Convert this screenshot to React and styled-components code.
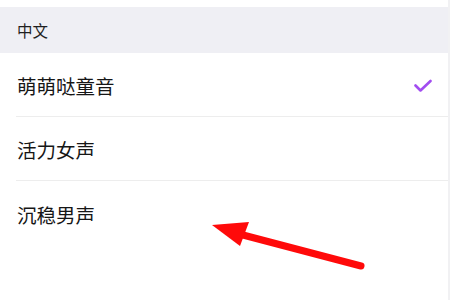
import React from "react";
import styled, { createGlobalStyle } from "styled-components";

const voices = [
  { name: "萌萌哒童音", selected: true },
  { name: "活力女声", selected: false },
  { name: "沉稳男声", selected: false },
];

function App() {
  return (
    <>
      <GlobalStyle />
      <Page>
        <TopGap />
        <SectionHeader>中文</SectionHeader>
        <List>
          {voices.map((v) => (
            <Row key={v.name}>
              <RowLabel>{v.name}</RowLabel>
              {v.selected && (
                <Check width="18" height="14" viewBox="0 0 18 14">
                  <path
                    d="M1.5 6.5 L6.5 11.5 L16.5 2"
                    fill="none"
                    stroke="#a24df0"
                    strokeWidth="2.6"
                    strokeLinecap="round"
                    strokeLinejoin="round"
                  />
                </Check>
              )}
            </Row>
          ))}
        </List>
        {/* red annotation arrow drawn over the list */}
        <Arrow width="450" height="300" viewBox="0 0 450 300">
          <line
            x1="243"
            y1="235"
            x2="361"
            y2="266"
            stroke="#ff0a0a"
            strokeWidth="7"
            strokeLinecap="round"
          />
          <polygon points="212,225 249,222 240,246" fill="#ff0a0a" />
        </Arrow>
      </Page>
    </>
  );
}

const GlobalStyle = createGlobalStyle`
  html, body {
    margin: 0;
    padding: 0;
    background: #ffffff;
  }
  body {
    font-family: "Noto Sans CJK SC", "Noto Sans", sans-serif;
  }
`;

const Page = styled.div`
  position: relative;
  width: 448px;
  height: 300px;
  border-right: 2px solid #f1f1f3;
  background: #ffffff;
  overflow: hidden;
`;

const TopGap = styled.div`
  height: 7px;
`;

const SectionHeader = styled.div`
  height: 46px;
  display: flex;
  align-items: center;
  padding-left: 17px;
  background: #efeff4;
  color: #1f1f1f;
  font-size: 15.5px;
`;

const List = styled.div`
  display: flex;
  flex-direction: column;
  padding-left: 16px;
`;

const Row = styled.div`
  height: 64px;
  box-sizing: border-box;
  display: flex;
  align-items: center;
  justify-content: space-between;
  padding: 2px 16px 0 1px;
  border-bottom: 1px solid #ededed;

  &:last-child {
    border-bottom: none;
  }
`;

const RowLabel = styled.span`
  font-size: 19.5px;
  color: #161616;
`;

const Check = styled.svg`
  display: block;
`;

const Arrow = styled.svg`
  position: absolute;
  left: 0;
  top: 0;
  pointer-events: none;
`;

export default App;
